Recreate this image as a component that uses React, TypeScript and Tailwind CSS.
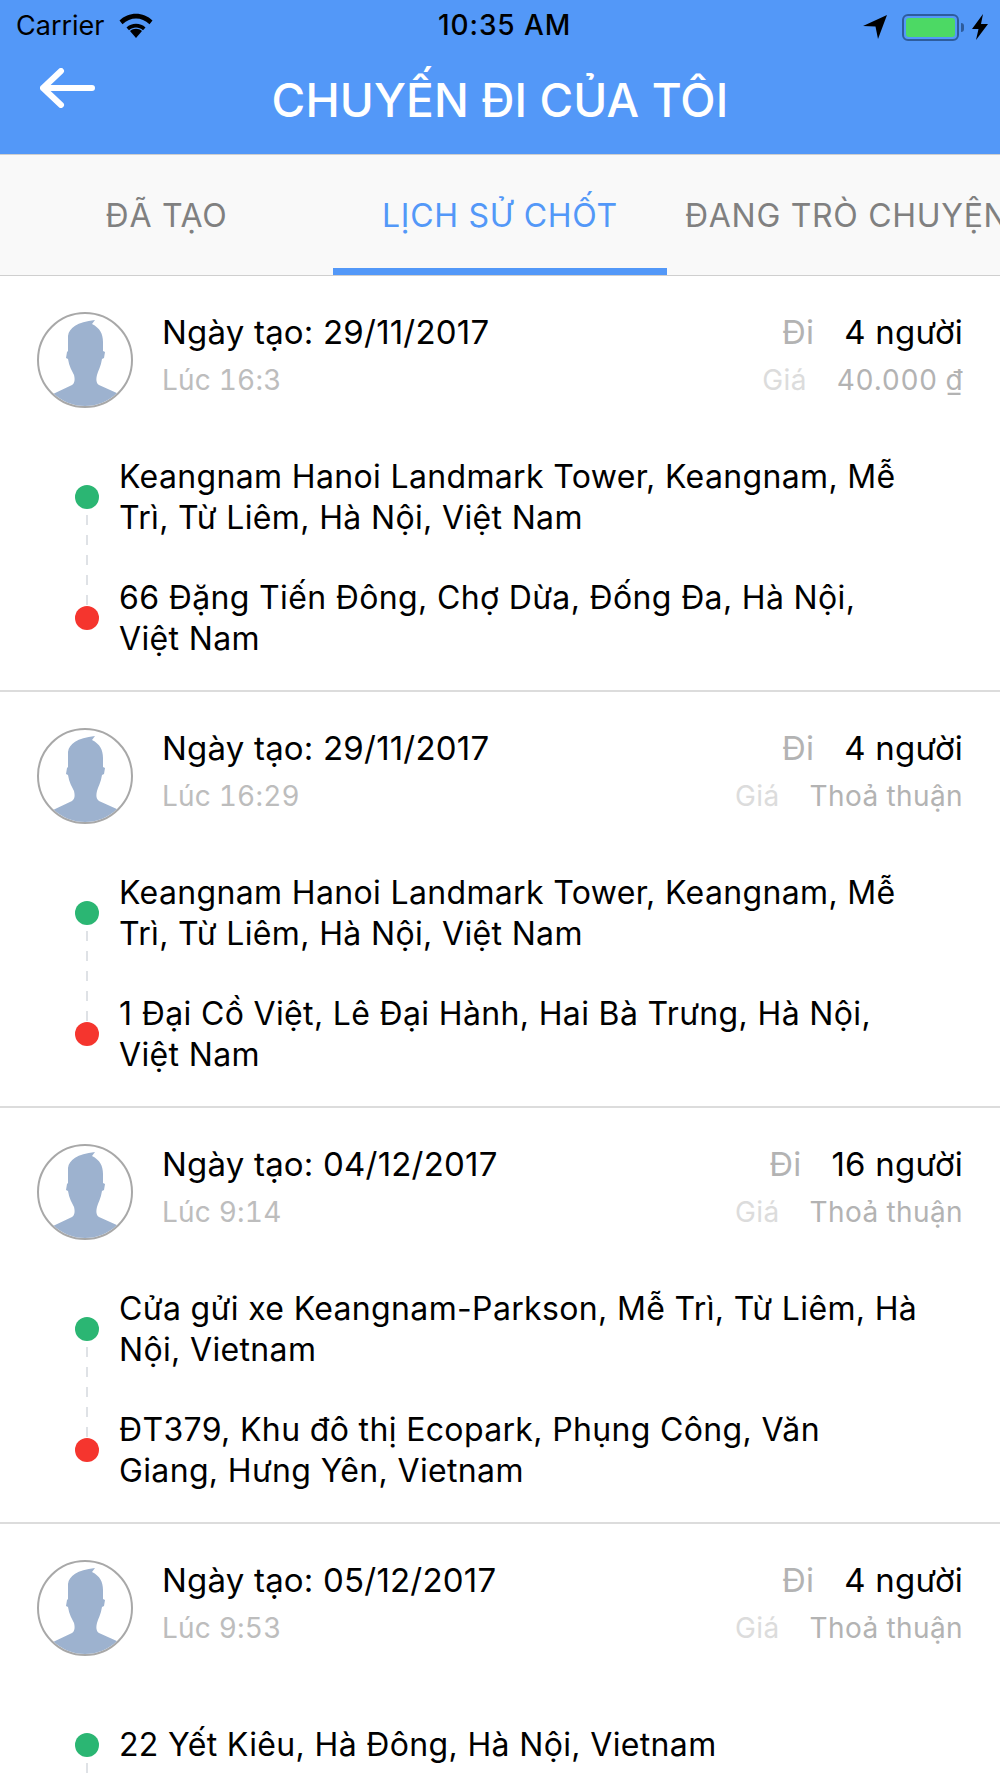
const trips = [
  {
    date: "29/11/2017",
    time: "Lúc 16:3",
    people: "4 người",
    price: "40.000 ₫",
    from: "Keangnam Hanoi Landmark Tower, Keangnam, Mễ\nTrì, Từ Liêm, Hà Nội, Việt Nam",
    to: "66 Đặng Tiến Đông, Chợ Dừa, Đống Đa, Hà Nội,\nViệt Nam",
  },
  {
    date: "29/11/2017",
    time: "Lúc 16:29",
    people: "4 người",
    price: "Thoả thuận",
    from: "Keangnam Hanoi Landmark Tower, Keangnam, Mễ\nTrì, Từ Liêm, Hà Nội, Việt Nam",
    to: "1 Đại Cồ Việt, Lê Đại Hành, Hai Bà Trưng, Hà Nội,\nViệt Nam",
  },
  {
    date: "04/12/2017",
    time: "Lúc 9:14",
    people: "16 người",
    price: "Thoả thuận",
    from: "Cửa gửi xe Keangnam-Parkson, Mễ Trì, Từ Liêm, Hà\nNội, Vietnam",
    to: "ĐT379, Khu đô thị Ecopark, Phụng Công, Văn\nGiang, Hưng Yên, Vietnam",
  },
  {
    date: "05/12/2017",
    time: "Lúc 9:53",
    people: "4 người",
    price: "Thoả thuận",
    from: "22 Yết Kiêu, Hà Đông, Hà Nội, Vietnam",
    to: "",
  },
];

function Avatar() {
  return (
    <div className="w-[96px] h-[96px] shrink-0 rounded-full border-2 border-[#a8a8a8] overflow-hidden bg-white">
      <svg viewBox="0 0 92 92" className="w-full h-full">
        <path
          fill="#9db2cf"
          d="M14 80 L33 71 C36 69 36 65 35 61 C33 57 30 52 29 45 L27 44 L28 38 L29 37 L29 22 C30 14 38 8 56 6 L53 10 C61 14 64 20 64 28 L64 37 L66 38 L65 44 L63 45 C62 52 59 57 58 61 C57 65 57 69 60 71 L80 80 L80 92 L14 92 Z"
        />
      </svg>
    </div>
  );
}

function StatusBar() {
  return (
    <div className="relative h-[54px] flex items-center justify-between pl-[16px] pr-[12px] text-black">
      <div className="flex items-center gap-[14px] pb-[3px]">
        <span className="text-[27px] leading-none">Carrier</span>
        <svg viewBox="0 0 34 25" className="w-[34px] h-[25px]">
          <path d="M17 25 L11 18 C14.5 15 19.5 15 23 18 Z" />
          <path d="M7.5 14.5 C12.5 9.5 21.500 9.5 26.500 14.500 L24 17.200 C20 13.500 14 13.500 10 17.200 Z" />
          <path d="M0.500 7.500 C9.500 -1.500 24.500 -1.500 33.500 7.500 L30.500 11.200 C22.500 3.500 11.500 3.500 3.500 11.200 Z" />
        </svg>
      </div>
      <span className="absolute left-[438px] top-[11px] text-[28px] leading-[28px] font-medium tracking-[0.9px]">10:35 AM</span>
      <div className="flex items-center">
        <svg viewBox="0 0 24 24" className="w-[24px] h-[24px] mr-[15px]">
          <path d="M24 0 L15 24 L12.500 11.500 L0 11 Z" />
        </svg>
        <div className="w-[57px] h-[27px] rounded-[6px] border-2 border-[#2e5c9c] p-[2px]">
          <div className="w-full h-full rounded-[3px] bg-[#4cd964]" />
        </div>
        <div className="w-[3px] h-[9px] rounded-r-[3px] bg-[#2e5c9c] ml-[2px] mr-[8px]" />
        <svg viewBox="0 0 16 26" className="w-[16px] h-[26px]">
          <path d="M11 0 L0 15 L6.500 15 L4 26 L16 10 L9 10 Z" />
        </svg>
      </div>
    </div>
  );
}

function Trip({ trip }: { trip: (typeof trips)[number] }) {
  return (
    <div className="h-[416px] shrink-0 border-b-2 border-[#dcdcdc] px-[37px] pt-[36px]">
      <div className="flex items-start h-[96px]">
        <Avatar />
        <div className="ml-[29px] flex-1">
          <div className="flex justify-between text-[33px] leading-[40px] tracking-[0.2px] text-black">
            <span>Ngày tạo: {trip.date}</span>
            <span className="flex">
              <span className="text-[#b3b3b3] mr-[30px]">Đi</span>
              <span>{trip.people}</span>
            </span>
          </div>
          <div className="flex justify-between text-[28px] leading-[34px] tracking-[0.2px] tabular-nums mt-[11px]">
            <span className="text-[#bdbdbd]">{trip.time}</span>
            <span className="flex tracking-[0.4px]">
              <span className="text-[#dcdcdc] mr-[30px]">Giá</span>
              <span className="text-[#b3b3b3]">{trip.price}</span>
            </span>
          </div>
        </div>
      </div>
      <div className="mt-[28px] flex flex-col">
        <Stop color="bg-[#2bb673]" text={trip.from} line />
        {trip.to && <Stop color="bg-[#f5352e]" text={trip.to} />}
      </div>
    </div>
  );
}

function Stop({ color, text, line }: { color: string; text: string; line?: boolean }) {
  return (
    <div className="relative flex items-center pl-[82px] h-[121px]">
      <div className={`absolute left-[38px] top-1/2 -translate-y-1/2 w-[24px] h-[24px] rounded-full ${color}`} />
      {line && (
        <svg className="absolute left-[49px] top-[79px] w-[2px] h-[90px]" viewBox="0 0 2 90">
          <line x1="1" y1="0" x2="1" y2="90" stroke="#dfe2e6" strokeWidth="2" strokeDasharray="10 10" />
        </svg>
      )}
      <p className="mt-[2px] text-[32px] leading-[40.5px] tracking-[0.35px] text-black whitespace-pre-line">{text}</p>
    </div>
  );
}

export default function App() {
  return (
    <div className="w-[1000px] h-[1778px] overflow-hidden bg-white font-['Inter',sans-serif]">
      <div className="bg-[#5398f8]">
        <StatusBar />
        <div className="relative h-[100px] flex items-center justify-center pb-[8px]">
          <svg viewBox="0 0 56 40" className="absolute left-[40px] top-[14px] w-[56px] h-[40px]" fill="none" stroke="white" strokeWidth="6" strokeLinecap="round" strokeLinejoin="round">
            <path d="M3 20 L52 20 M21 3 L3 20 L21 37" />
          </svg>
          <h1 className="text-[46px] leading-[48px] font-medium text-white tracking-[0.1px]">CHUYẾN ĐI CỦA TÔI</h1>
        </div>
      </div>
      <div className="flex h-[122px] bg-[#f9f9f9] border-y border-[#cfcfcf] overflow-hidden text-[32px] tracking-[0.7px]">
        <div className="w-[333px] shrink-0 flex items-center justify-center text-[#808080] pt-[2px]">ĐÃ TẠO</div>
        <div className="w-[334px] shrink-0 flex items-center justify-center text-[#5398f8] border-b-[7px] border-[#5398f8] pt-[9px]">LỊCH SỬ CHỐT</div>
        <div className="w-[333px] shrink-0 pl-[18px] pt-[2px] flex items-center whitespace-nowrap text-[#808080]">ĐANG TRÒ CHUYỆN</div>
      </div>
      {trips.map((trip, i) => (
        <Trip key={i} trip={trip} />
      ))}
    </div>
  );
}
